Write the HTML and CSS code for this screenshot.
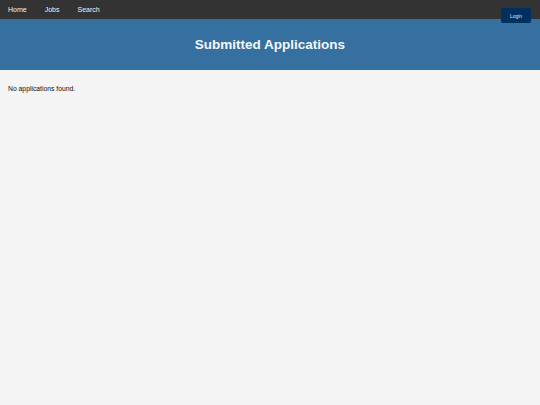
FILE: index.html
```html
<!DOCTYPE html>
<html>
<head>
<meta charset="utf-8">
<link rel="stylesheet" href="styles.css">
</head>
<body>
<nav class="topnav">
  <a href="#" class="navlink">Home</a>
  <a href="#" class="navlink">Jobs</a>
  <a href="#" class="navlink">Search</a>
</nav>
<button class="login-btn">Login</button>
<header class="hero">
  <h1 class="hero-title">Submitted Applications</h1>
</header>
<main class="content">
  <p class="empty">No applications found.</p>
</main>
</body>
</html>
```
FILE: styles.css
```css
html, body {
  margin: 0;
  padding: 0;
}
body {
  background: #f4f4f4;
  font-family: "Liberation Sans", Arial, sans-serif;
  color: #111;
  min-height: 405px;
  position: relative;
}
.topnav {
  background: #333333;
  height: 19px;
  display: flex;
  align-items: center;
  gap: 18px;
  padding-left: 8px;
}
.navlink {
  color: #f2f2f2;
  text-decoration: none;
  font-size: 7px;
}
.login-btn {
  position: absolute;
  top: 8px;
  right: 9px;
  width: 30px;
  height: 15px;
  padding: 0;
  border: none;
  border-radius: 2px;
  background: #00305f;
  color: #dfe6ee;
  font-family: "Liberation Sans", Arial, sans-serif;
  font-size: 5px;
}
.hero {
  background: #3570a1;
  height: 51px;
  display: flex;
  align-items: center;
  justify-content: center;
}
.hero-title {
  margin: 0;
  color: #f4f8fb;
  font-size: 13.5px;
  font-weight: bold;
}
.content {
  padding: 15px 8px;
}
.empty {
  margin: 0;
  font-size: 6.8px;
}
```
